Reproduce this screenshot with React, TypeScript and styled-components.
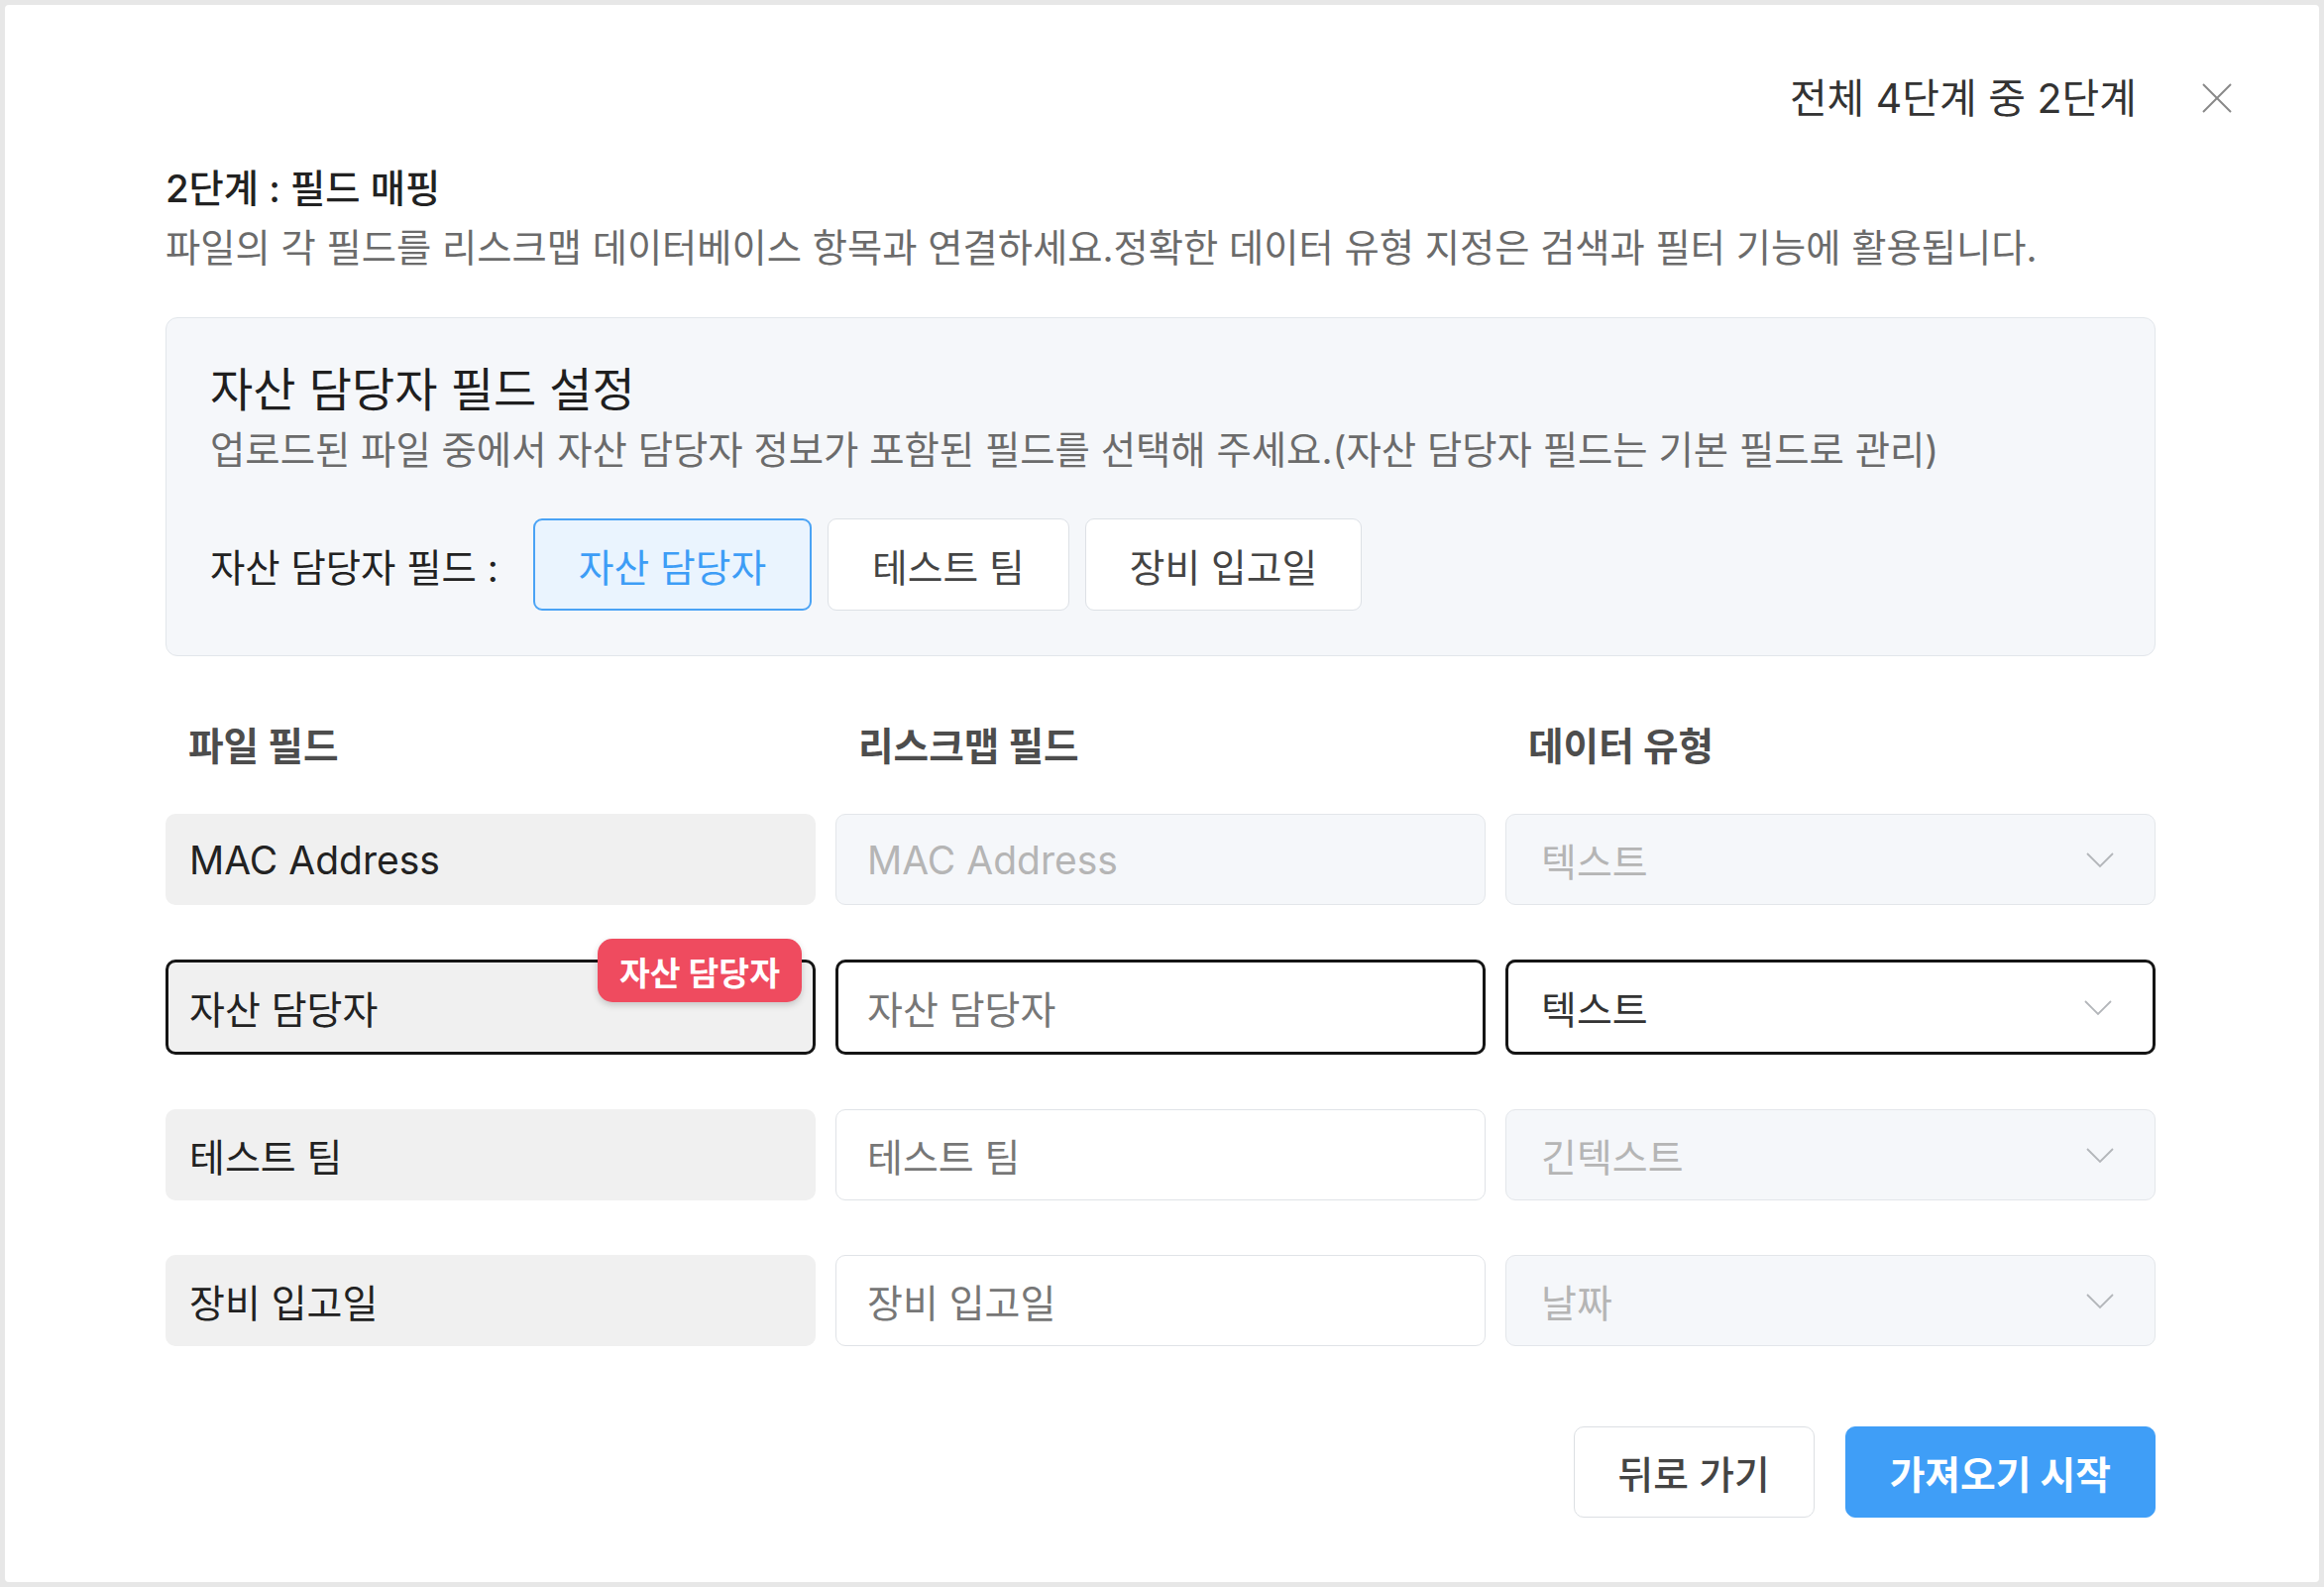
import React from "react";
import styled, { createGlobalStyle, css } from "styled-components";

// Static data
const OWNER_OPTIONS = ["자산 담당자", "테스트 팀", "장비 입고일"];

interface MappingRow {
  source: string;
  target: string;
  type: string;
  locked?: boolean;
  typeLocked?: boolean;
  owner?: boolean;
}

const ROWS: MappingRow[] = [
  { source: "MAC Address", target: "MAC Address", type: "텍스트", locked: true, typeLocked: true },
  { source: "자산 담당자", target: "자산 담당자", type: "텍스트", owner: true },
  { source: "테스트 팀", target: "테스트 팀", type: "긴텍스트", typeLocked: true },
  { source: "장비 입고일", target: "장비 입고일", type: "날짜", typeLocked: true },
];

const GlobalStyle = createGlobalStyle`
  html, body {
    margin: 0;
    padding: 0;
    background: #e7e7e7;
  }
  body {
    font-family: Inter, "Noto Sans CJK KR", sans-serif;
    color: #222;
  }
  * {
    box-sizing: border-box;
  }
`;

const Modal = styled.div`
  margin: 5px;
  height: 1591px;
  padding-top: 70px;
  background: #ffffff;
  border-radius: 4px;
`;

const Header = styled.header`
  display: flex;
  justify-content: flex-end;
  align-items: center;
  gap: 66px;
  height: 48px;
  padding-right: 88px;
`;

const StepText = styled.span`
  font-size: 41px;
  line-height: 48px;
  color: #333;
`;

const CloseButton = styled.button`
  display: flex;
  padding: 0;
  border: none;
  background: none;
  cursor: pointer;
`;

const Body = styled.div`
  padding: 42px 165px 0 162px;
`;

const Title = styled.h2`
  margin: 0;
  font-size: 38.3px;
  line-height: 50px;
  font-weight: 500;
  color: #222;
`;

const Description = styled.p`
  margin: 10px 0 0;
  font-size: 38.3px;
  line-height: 50px;
  color: #6b6b6b;
`;

const OwnerPanel = styled.section`
  margin-top: 45px;
  padding: 41px 44px 45px 44px;
  background: #f5f7fa;
  border: 1px solid #e2e6eb;
  border-radius: 12px;
`;

const PanelTitle = styled.h3`
  margin: 0;
  font-size: 47px;
  line-height: 62px;
  font-weight: 400;
  color: #1f1f1f;
`;

const PanelDescription = styled.p`
  margin: 5px 0 0;
  font-size: 38.4px;
  line-height: 50px;
  color: #6b6b6b;
`;

const ChipRow = styled.div`
  display: flex;
  align-items: center;
  gap: 16px;
  margin-top: 44px;
`;

const ChipLabel = styled.span`
  margin-right: 19px;
  font-size: 38.4px;
  color: #222;
`;

const Chip = styled.button<{ $selected?: boolean }>`
  height: 93px;
  padding: 0 44px;
  font-family: inherit;
  font-size: 38.8px;
  border-radius: 9px;
  cursor: pointer;
  ${({ $selected }) =>
    $selected
      ? css`
          background: #eaf4fe;
          border: 2px solid #4aa3f5;
          color: #3d9df6;
        `
      : css`
          background: #ffffff;
          border: 1px solid #dde1e6;
          color: #444;
        `}
`;

const MappingGrid = styled.div`
  display: grid;
  grid-template-columns: repeat(3, 1fr);
  column-gap: 20px;
  row-gap: 55px;
  margin-top: 66px;
`;

const ColumnHeading = styled.div`
  margin-bottom: -12px;
  padding-left: 23px;
  font-size: 38.7px;
  line-height: 50px;
  font-weight: 700;
  color: #4d4d4d;
`;

type FieldKind = "source" | "input" | "locked";

const Field = styled.div<{ $kind: FieldKind; $active?: boolean; $inset?: number }>`
  position: relative;
  display: flex;
  align-items: center;
  justify-content: space-between;
  height: 90px;
  box-sizing: content-box;
  padding: 0 40px 0 ${({ $inset = 23 }) => $inset}px;
  font-size: 39px;
  border-radius: 10px;
  border: 1px solid transparent;
  ${({ $kind }) =>
    $kind === "source"
      ? css`
          background: #f0f0f0;
          color: #222;
        `
      : $kind === "locked"
      ? css`
          background: #f5f7fa;
          border-color: #e3e6ea;
          color: #b5b5b5;
        `
      : css`
          background: #ffffff;
          border-color: #e0e3e7;
          color: #777;
        `}
  ${({ $active, $inset = 23 }) =>
    $active &&
    css`
      border: 3px solid #151515;
      padding-left: ${$inset - 2}px;
    `}
`;

const TypeText = styled.span<{ $strong?: boolean }>`
  color: ${({ $strong }) => ($strong ? "#333" : "inherit")};
`;

const OwnerBadge = styled.span`
  position: absolute;
  top: -24px;
  right: 11px;
  height: 64px;
  padding: 0 22px;
  display: flex;
  align-items: center;
  background: #ef4b5f;
  color: #ffffff;
  font-size: 33.5px;
  font-weight: 700;
  border-radius: 15px;
  box-shadow: 0 3px 7px rgba(0, 0, 0, 0.18);
`;

const Footer = styled.footer`
  display: flex;
  justify-content: flex-end;
  gap: 31px;
  margin-top: 81px;
`;

const FooterButton = styled.button<{ $primary?: boolean }>`
  height: 92px;
  padding: 0 44px;
  font-family: inherit;
  font-size: 38.8px;
  border-radius: 10px;
  cursor: pointer;
  ${({ $primary }) =>
    $primary
      ? css`
          background: #3f9ef7;
          border: 1px solid #3f9ef7;
          color: #ffffff;
          font-weight: 700;
        `
      : css`
          background: #ffffff;
          border: 1px solid #dcdfe3;
          color: #444;
          font-weight: 500;
        `}
`;

const Chevron = () => (
  <svg width="30" height="17" viewBox="0 0 30 17" fill="none">
    <polyline points="2,2 15,15 28,2" stroke="#b3b6ba" strokeWidth="1.8" />
  </svg>
);

const CloseIcon = () => (
  <svg width="30" height="30" viewBox="0 0 30 30" fill="none">
    <line x1="1" y1="1" x2="29" y2="29" stroke="#888" strokeWidth="2" />
    <line x1="29" y1="1" x2="1" y2="29" stroke="#888" strokeWidth="2" />
  </svg>
);

const App = () => {
  return (
    <>
      <GlobalStyle />
      <Modal>
        <Header>
          <StepText>전체 4단계 중 2단계</StepText>
          <CloseButton aria-label="닫기">
            <CloseIcon />
          </CloseButton>
        </Header>

        <Body>
          <Title>2단계 : 필드 매핑</Title>
          <Description>
            파일의 각 필드를 리스크맵 데이터베이스 항목과 연결하세요.정확한 데이터 유형 지정은 검색과 필터 기능에 활용됩니다.
          </Description>

          <OwnerPanel>
            <PanelTitle>자산 담당자 필드 설정</PanelTitle>
            <PanelDescription>
              업로드된 파일 중에서 자산 담당자 정보가 포함된 필드를 선택해 주세요.(자산 담당자 필드는 기본 필드로 관리)
            </PanelDescription>
            <ChipRow>
              <ChipLabel>자산 담당자 필드 :</ChipLabel>
              {OWNER_OPTIONS.map((option, idx) => (
                <Chip key={option} $selected={idx === 0}>
                  {option}
                </Chip>
              ))}
            </ChipRow>
          </OwnerPanel>

          <MappingGrid>
            <ColumnHeading>파일 필드</ColumnHeading>
            <ColumnHeading>리스크맵 필드</ColumnHeading>
            <ColumnHeading>데이터 유형</ColumnHeading>

            {ROWS.map((row) => (
              <React.Fragment key={row.source}>
                <Field $kind="source" $active={row.owner}>
                  {row.source}
                  {row.owner && <OwnerBadge>자산 담당자</OwnerBadge>}
                </Field>
                <Field $kind={row.locked ? "locked" : "input"} $active={row.owner} $inset={31}>
                  {row.target}
                </Field>
                <Field $kind={row.typeLocked ? "locked" : "input"} $active={row.owner} $inset={35}>
                  <TypeText $strong={row.owner}>{row.type}</TypeText>
                  <Chevron />
                </Field>
              </React.Fragment>
            ))}
          </MappingGrid>

          <Footer>
            <FooterButton>뒤로 가기</FooterButton>
            <FooterButton $primary>가져오기 시작</FooterButton>
          </Footer>
        </Body>
      </Modal>
    </>
  );
};

export default App;
